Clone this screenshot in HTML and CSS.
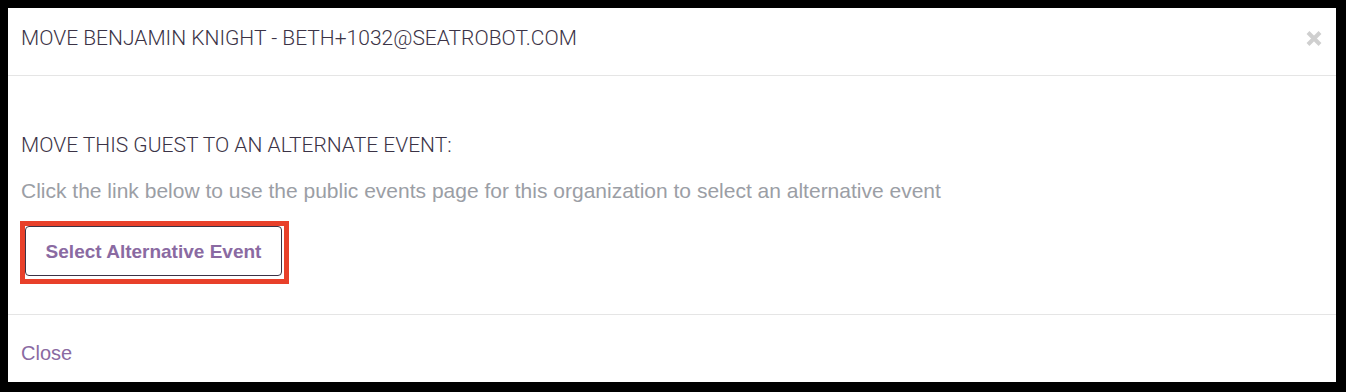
FILE: index.html
```html
<!DOCTYPE html>
<html lang="en">
<head>
    <meta charset="UTF-8">
    <title>Move guest</title>
    <link rel="stylesheet" href="styles.css">
</head>
<body>
    <div class="modal">
        <div class="modal-header">
            <h4>MOVE BENJAMIN KNIGHT - BETH+1032@SEATROBOT.COM</h4>
            <button class="close-x" type="button" aria-label="Close">
                <svg width="18" height="17" viewBox="0 0 18 17">
                    <path d="M3 2.5 L15 14.5 M15 2.5 L3 14.5" stroke="#cfcfcf" stroke-width="4"/>
                </svg>
            </button>
        </div>

        <div class="modal-body">
            <h5>MOVE THIS GUEST TO AN ALTERNATE EVENT:</h5>
            <p class="hint">Click the link below to use the public events page for this organization to select an alternative event</p>
            <div class="highlight">
                <a class="btn-alt" href="#">Select Alternative Event</a>
            </div>
        </div>

        <div class="modal-footer">
            <a class="close-link" href="#">Close</a>
        </div>
    </div>
</body>
</html>
```

FILE: styles.css
```css
* {
    box-sizing: border-box;
    margin: 0;
    padding: 0;
}

body {
    background-color: #000;
    margin: 8px;
    font-family: 'Liberation Sans', Arial, sans-serif;
}

.modal {
    background-color: #fff;
    width: 1328px;
    height: 374px;
    display: flex;
    flex-direction: column;
}

.modal-header {
    height: 68px;
    border-bottom: 1px solid #e5e5e5;
    display: flex;
    align-items: center;
    justify-content: space-between;
    padding: 0 13px 7px 13px;
}

.modal-header h4 {
    font-family: Roboto, sans-serif;
    font-weight: 300;
    font-size: 21px;
    color: #3b3346;
}

.close-x {
    background: none;
    border: none;
    display: flex;
}

.modal-body {
    flex: 1;
    padding: 0 13px;
}

.modal-body h5 {
    font-family: Roboto, sans-serif;
    font-weight: 300;
    font-size: 21px;
    color: #3b3346;
    margin-top: 57px;
}

.hint {
    font-size: 21px;
    color: #9b9ea5;
    margin-top: 22px;
}

.highlight {
    display: inline-block;
    border: 5px solid #e8402a;
    padding: 0 2px 3px 0;
    margin-top: 18px;
    margin-left: -1px;
}

.btn-alt {
    display: block;
    width: 257px;
    height: 50px;
    line-height: 49px;
    border: 1px solid #3b3346;
    border-radius: 4px;
    text-align: center;
    font-weight: bold;
    font-size: 19px;
    color: #8a6aa2;
    text-decoration: none;
}

.modal-footer {
    height: 68px;
    border-top: 1px solid #e5e5e5;
    padding: 27px 13px 0 13px;
}

.close-link {
    font-size: 20px;
    color: #8a6aa2;
    text-decoration: none;
}
```
